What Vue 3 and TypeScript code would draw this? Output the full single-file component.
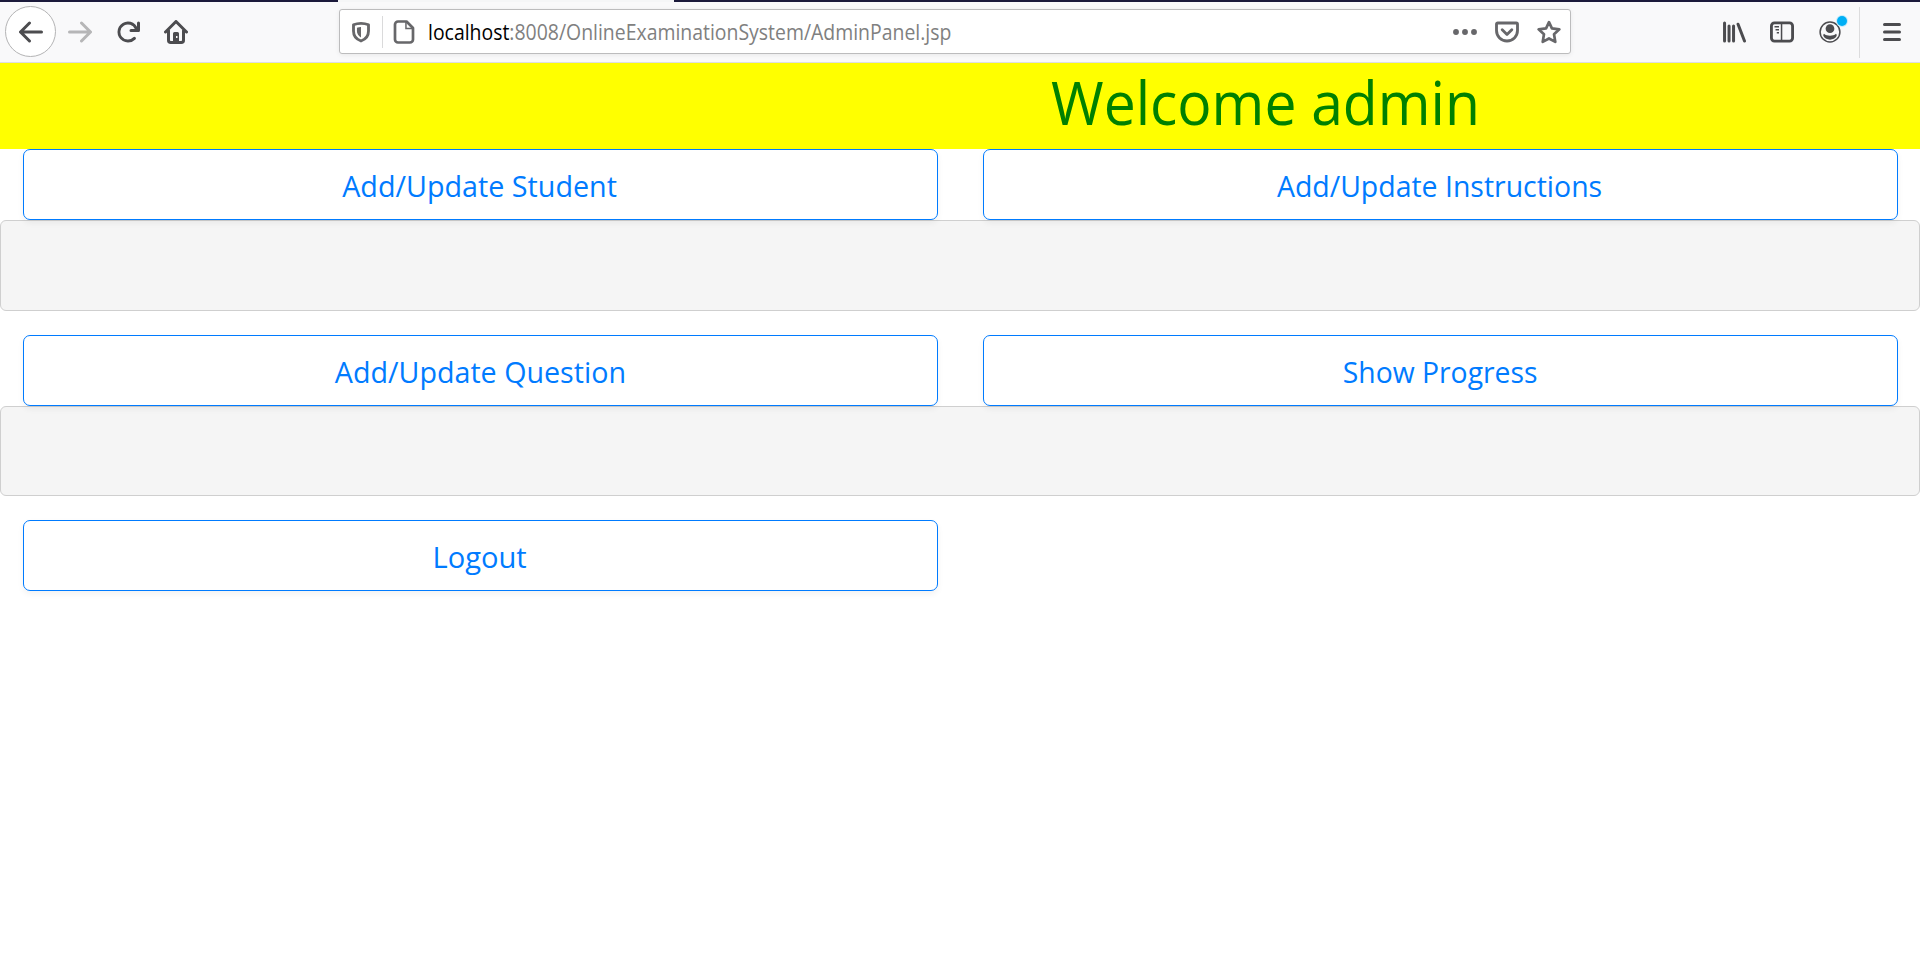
<script setup lang="ts">
interface Action {
  label: string
  fit: string
}

const rows: Action[][] = [
  [
    { label: 'Add/Update Student', fit: 'student' },
    { label: 'Add/Update Instructions', fit: 'instructions' },
  ],
  [
    { label: 'Add/Update Question', fit: 'question' },
    { label: 'Show Progress', fit: 'progress' },
  ],
  [{ label: 'Logout', fit: 'logout' }],
]
</script>

<template>
  <div class="window">
    <header class="browser">
      <div class="tabstrip"><i class="active-tab"></i></div>
      <div class="toolbar">
        <button class="back" aria-label="Back">
          <svg class="icon" viewBox="0 0 16 16"><path d="M15 7H3.414l4.293-4.293a1 1 0 0 0-1.414-1.414l-6 6a1 1 0 0 0 0 1.414l6 6a1 1 0 0 0 1.414-1.414L3.414 9H15a1 1 0 0 0 0-2z" /></svg>
        </button>
        <svg class="icon forward" viewBox="0 0 16 16"><path d="M1 7h11.586L8.293 2.707a1 1 0 0 1 1.414-1.414l6 6a1 1 0 0 1 0 1.414l-6 6a1 1 0 0 1-1.414-1.414L12.586 9H1a1 1 0 0 1 0-2z" /></svg>
        <svg class="icon reload" viewBox="0 0 16 16"><path d="M15 1a1 1 0 0 0-1 1v2.418A6.995 6.995 0 1 0 8 15a6.954 6.954 0 0 0 4.95-2.05 1 1 0 0 0-1.414-1.414A5.019 5.019 0 1 1 12.549 6H10a1 1 0 0 0 0 2h5a1 1 0 0 0 1-1V2a1 1 0 0 0-1-1z" /></svg>
        <svg class="icon home" viewBox="0 0 16 16">
          <path d="M1 8 8 1l7 7M3 7v6.5A1.5 1.5 0 0 0 4.500 15h7a1.500 1.500 0 0 0 1.500-1.500V7" fill="none" stroke="currentColor" stroke-width="2" stroke-linecap="round" stroke-linejoin="round" />
          <path fill-rule="evenodd" d="M7 8h2a1 1 0 0 1 1 1v6H6V9a1 1 0 0 1 1-1zM8 10.700h1v1.300H8z" />
        </svg>

        <div class="urlbar">
          <svg class="icon shield" viewBox="0 0 16 16">
            <path d="M8 2.200c1.700 0 3.400.3 5 1v4.200c0 3-1.800 5.500-5 6.600-3.200-1.100-5-3.600-5-6.600V3.200c1.600-.7 3.300-1 5-1z" fill="none" stroke="currentColor" stroke-width="1.900" stroke-linejoin="round" />
            <path d="M8 4.600v7c-1.700-.9-2.700-2.500-2.700-4.300V5.100C6.200 4.800 7.100 4.600 8 4.600z" />
          </svg>
          <i class="split"></i>
          <svg class="icon page" viewBox="0 0 16 16">
            <path d="M4 1h5.700L14 5.300V13a2 2 0 0 1-2 2H4a2 2 0 0 1-2-2V3a2 2 0 0 1 2-2z" fill="none" stroke="currentColor" stroke-width="1.800" stroke-linejoin="round" />
            <path d="M9.300 1v4.700H14" fill="none" stroke="currentColor" stroke-width="1" />
          </svg>
          <span class="url"><b>localhost</b>:8008/OnlineExaminationSystem/AdminPanel.jsp</span>
          <svg class="icon dots" viewBox="0 0 16 16"><circle cx="2" cy="8" r="1.950" /><circle cx="8" cy="8" r="1.950" /><circle cx="14" cy="8" r="1.950" /></svg>
          <svg class="icon pocket" viewBox="0 0 16 16" fill="none" stroke="currentColor" stroke-width="1.900" stroke-linecap="round" stroke-linejoin="round">
            <path d="M1.800 2h12.400a.8.8 0 0 1 .8.800V7A7 7 0 0 1 1 7V2.800A.8.8 0 0 1 1.800 2z" /><path d="M4.800 6.500 8 9.600l3.200-3.100" />
          </svg>
          <svg class="icon star" viewBox="0 0 16 16" fill="none" stroke="currentColor" stroke-width="1.800" stroke-linejoin="round"><path d="m8 1.400 1.950 4.200 4.950.6-3.550 3.300.85 5.100L8 12.300l-4.200 2.300.85-5.100L1.100 6.200l4.950-.6z" /></svg>
        </div>

        <svg class="icon library" viewBox="0 0 16 16" fill="none" stroke="currentColor" stroke-width="2" stroke-linecap="round"><path d="M1.700 2v12M4.700 4v10M7.700 4v10M10.700 2.800 15 14" /></svg>
        <svg class="icon sidebar" viewBox="0 0 16 16" fill="none" stroke="currentColor">
          <rect x=".95" y="1.950" width="14.100" height="12.100" rx="2" stroke-width="1.900" /><path d="M7.700 2v12M3 4.500h3M3.700 6.500H6M4.500 8.500H6" stroke-width="1" />
        </svg>
        <div class="account">
          <svg class="icon" viewBox="0 0 16 16"><circle cx="8" cy="8" r="6.600" fill="none" stroke="currentColor" stroke-width="1" /><circle cx="8" cy="5.800" r="2.900" /><path d="M4 9.200c1 .9 2.500 1.300 4 1.300s3-.4 4-1.300c.5.500.6 1.100.3 1.700-.8 1.400-2.400 2.200-4.300 2.200s-3.500-.8-4.300-2.200c-.3-.6-.2-1.200.3-1.700z" /></svg>
          <i class="badge"></i>
        </div>
        <i class="divider"></i>
        <svg class="icon menu" viewBox="0 0 16 16" fill="none" stroke="currentColor" stroke-width="2" stroke-linecap="round"><path d="M3 3h10M3 8h10M3 13h10" /></svg>
      </div>
    </header>

    <main>
      <div class="banner"><h1>Welcome admin</h1></div>
      <section v-for="(row, i) in rows" :key="i" class="group">
        <div class="row">
          <button v-for="a in row" :key="a.label" class="action"><span class="label" :class="a.fit">{{ a.label }}</span></button>
        </div>
        <div v-if="i < rows.length - 1" class="panel"></div>
      </section>
    </main>
  </div>
</template>

<style>
html, body { margin: 0; background: #fff; overflow: hidden; }
</style>

<style scoped>
* { box-sizing: border-box; }
.window { height: 968px; font-family: "Open Sans", "Noto Sans", sans-serif; background: #fff; }
button { margin: 0; padding: 0; font: inherit; }
.browser { height: 63px; background: #f9f9fa; border-bottom: 1px solid #dedee2; }
.tabstrip { height: 2px; background: #1b1a3b; padding-left: 338px; }
.active-tab { display: block; width: 336px; height: 2px; background: #f5f6f7; }
.toolbar { height: 60px; display: flex; align-items: center; color: #4c4c4f; }
.icon { display: block; flex: none; width: 24px; height: 24px; fill: currentColor; }
.icon[fill="none"] { fill: none; }
.back { flex: none; width: 51px; height: 51px; margin: 0 0 1px 5px; border: 1px solid #b4b4b5; border-radius: 50%; background: #fff; color: inherit; display: flex; align-items: center; justify-content: center; }
.forward { margin-left: 12px; color: #b6b6b7; }
.reload { margin-left: 24px; }
.home { margin-left: 24px; }
.urlbar { width: 1232px; height: 45px; margin: 0 0 1px 151px; background: #fff; border: 1px solid #bcbcbd; border-radius: 3px; box-shadow: 0 1px 5px rgba(0, 0, 0, .07); display: flex; align-items: center; color: #67676a; }
.shield { margin-left: 9px; }
.split { width: 1px; height: 32px; margin-left: 9px; background: #dadadb; }
.page { margin-left: 9px; }
.url { flex: 1; margin-left: 12px; padding-top: 1px; font-size: 21px; line-height: 30px; white-space: nowrap; color: #808080; transform: scaleX(.925); transform-origin: left; }
.url b { font-weight: 400; color: #000; }
.pocket { margin-left: 18px; }
.star { margin: 0 9px 0 18px; }
.library { margin-left: 151px; }
.sidebar { margin-left: 24px; }
.account { position: relative; margin-left: 24px; }
.badge { position: absolute; top: -4px; right: -5px; width: 10px; height: 10px; border-radius: 50%; background: #00aff5; box-shadow: 0 0 0 1px #c5eafa; }
.divider { width: 1px; height: 51px; margin-left: 17px; background: #dcdcdd; }
.menu { margin-left: 20px; }

.banner { height: 86px; padding-left: 1051px; background: #ff0; }
h1 { margin: 0; font-size: 60px; line-height: 79px; font-weight: 400; color: #008000; white-space: nowrap; transform: scaleX(.95); transform-origin: left; }
.row { display: flex; gap: 45px; padding: 0 22.5px; }
.action { flex: none; width: 915px; height: 71px; padding-top: 1px; border: 1px solid #007bff; border-radius: 7px; background: #fff; color: #007bff; font-size: 30px; line-height: 45px; box-shadow: 0 3px 6px rgba(0, 0, 0, .055); white-space: nowrap; }
.label { display: inline-block; }
.student { transform: scaleX(.957); }
.instructions { transform: scaleX(.948); }
.question { transform: scaleX(.955); }
.progress { transform: scaleX(.944); }
.logout { transform: scaleX(.97); }
.panel { height: 91px; margin-bottom: 24px; border: 1px solid #cfcfcf; border-radius: 6px; background: rgba(0, 0, 0, .041); }
.group:nth-of-type(2) .panel { height: 90px; }
</style>
